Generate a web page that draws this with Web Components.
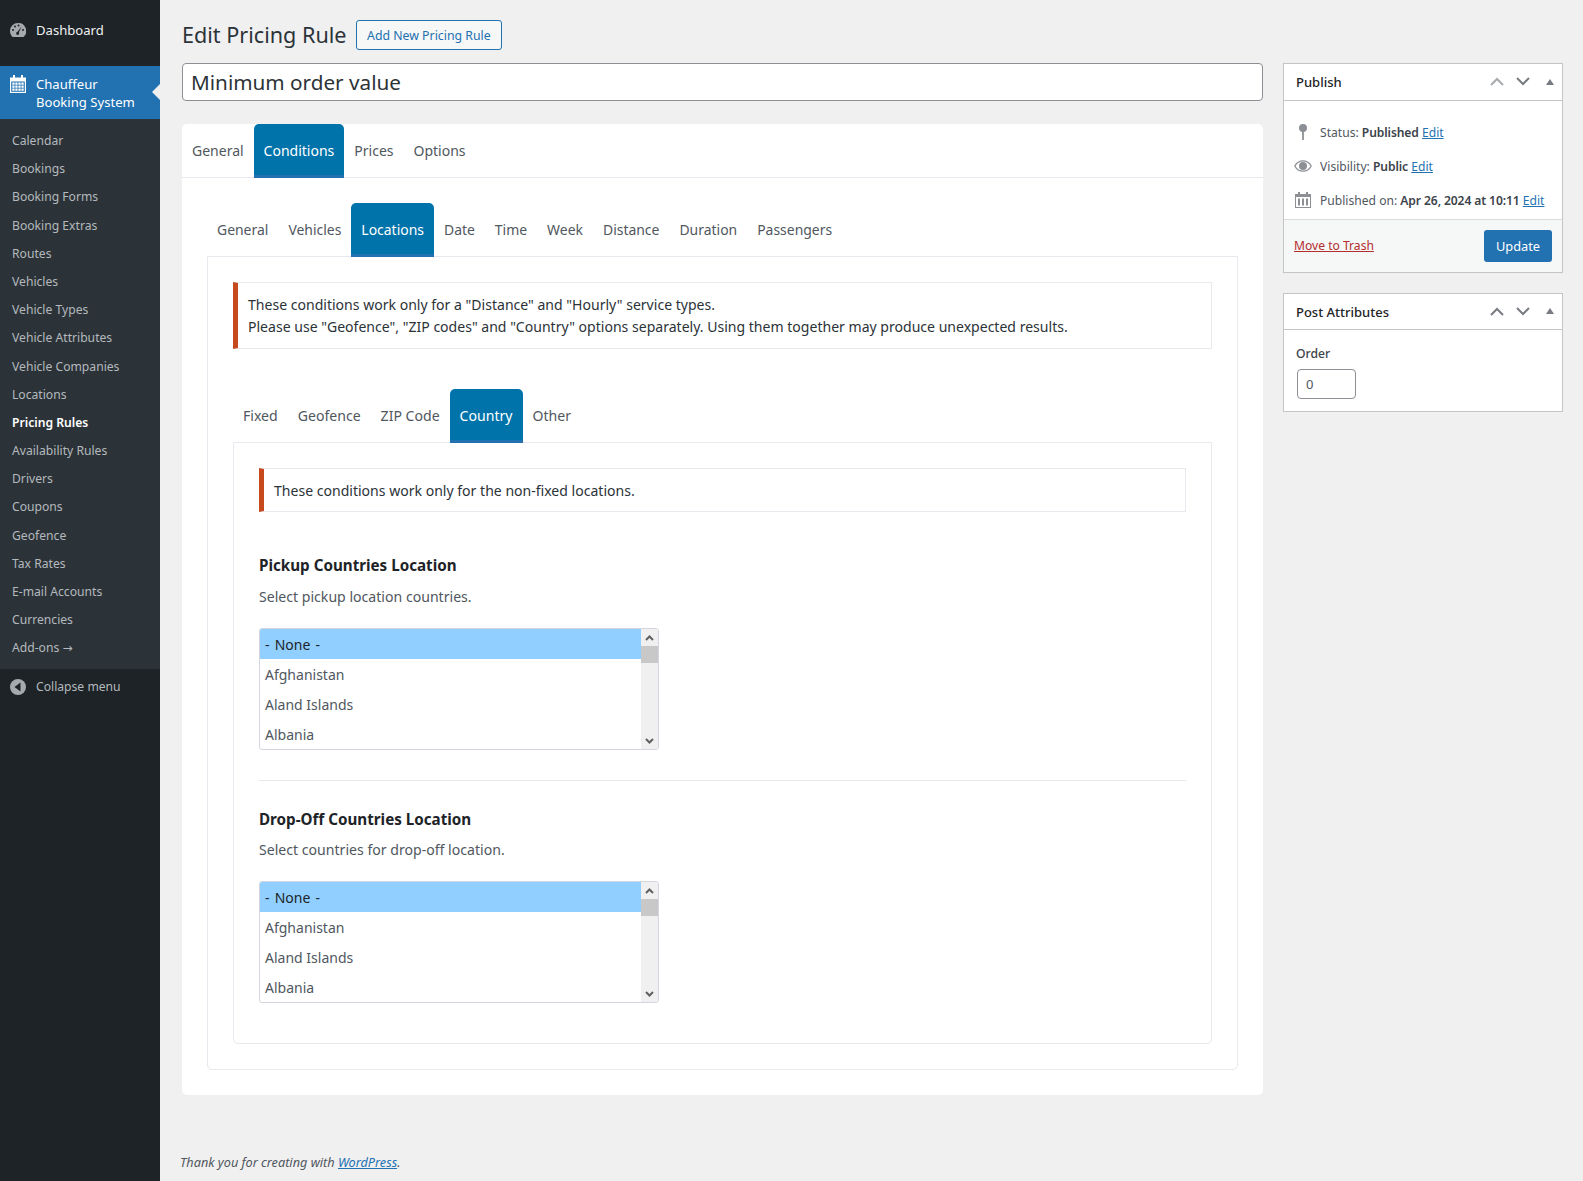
<!DOCTYPE html>
<html>
<head>
<meta charset="utf-8">
<title>Edit Pricing Rule</title>
<style>
  html, body { margin: 0; background: #f0f0f1; }
  body { font: 13px "Noto Sans", "Open Sans", sans-serif; color: #3c434a; }
</style>
</head>
<body>
<wp-shell>
  <wp-sidebar slot="side">
    <menu-top icon="gauge">Dashboard</menu-top>
    <menu-top icon="calendar" active>Chauffeur<br>Booking System</menu-top>
    <side-link slot="sub">Calendar</side-link>
    <side-link slot="sub">Bookings</side-link>
    <side-link slot="sub">Booking Forms</side-link>
    <side-link slot="sub">Booking Extras</side-link>
    <side-link slot="sub">Routes</side-link>
    <side-link slot="sub">Vehicles</side-link>
    <side-link slot="sub">Vehicle Types</side-link>
    <side-link slot="sub">Vehicle Attributes</side-link>
    <side-link slot="sub">Vehicle Companies</side-link>
    <side-link slot="sub">Locations</side-link>
    <side-link slot="sub" current>Pricing Rules</side-link>
    <side-link slot="sub">Availability Rules</side-link>
    <side-link slot="sub">Drivers</side-link>
    <side-link slot="sub">Coupons</side-link>
    <side-link slot="sub">Geofence</side-link>
    <side-link slot="sub">Tax Rates</side-link>
    <side-link slot="sub">E-mail Accounts</side-link>
    <side-link slot="sub">Currencies</side-link>
    <side-link slot="sub">Add-ons <span style="font-family:'DejaVu Sans',sans-serif;font-size:12px">→</span></side-link>
    <menu-top slot="after" icon="collapse" muted>Collapse menu</menu-top>
  </wp-sidebar>

  <page-head slot="head" title="Edit Pricing Rule" action="Add New Pricing Rule"></page-head>

  <title-input slot="main" value="Minimum order value"></title-input>
  <tab-card slot="main">
    <tab-strip>
      <tab-item>General</tab-item><tab-item active>Conditions</tab-item><tab-item>Prices</tab-item><tab-item>Options</tab-item>
    </tab-strip>
    <div style="padding:25px 25px 25px 25px">
      <tab-strip bare style="font-size:13.95px">
        <tab-item>General</tab-item><tab-item>Vehicles</tab-item><tab-item active>Locations</tab-item><tab-item>Date</tab-item><tab-item>Time</tab-item><tab-item>Week</tab-item><tab-item>Distance</tab-item><tab-item>Duration</tab-item><tab-item>Passengers</tab-item>
      </tab-strip>
      <tab-panel>
        <note-box>These conditions work only for a "Distance" and "Hourly" service types.<br>Please use "Geofence", "ZIP codes" and "Country" options separately. Using them together may produce unexpected results.</note-box>
        <tab-strip bare style="margin-top:40px;font-size:14.08px">
          <tab-item>Fixed</tab-item><tab-item>Geofence</tab-item><tab-item>ZIP Code</tab-item><tab-item active>Country</tab-item><tab-item>Other</tab-item>
        </tab-strip>
        <tab-panel>
          <note-box style="--note-bottom:9px">These conditions work only for the non-fixed locations.</note-box>
          <field-group label="Pickup Countries Location" hint="Select pickup location countries." style="margin-top:42px;--hint-gap:10px">
            <country-list></country-list>
          </field-group>
          <field-group divided label="Drop-Off Countries Location" hint="Select countries for drop-off location.">
            <country-list></country-list>
          </field-group>
        </tab-panel>
      </tab-panel>
    </div>
  </tab-card>

  <meta-box slot="aside" heading="Publish" up-off>
    <publish-body></publish-body>
  </meta-box>
  <meta-box slot="aside" heading="Post Attributes" thin>
    <order-field></order-field>
  </meta-box>

  <wp-foot slot="foot"></wp-foot>
</wp-shell>

<script>
const ICONS = {
  gauge: `<svg width="16" height="14" viewBox="0 0 16 14"><path fill="currentColor" d="M8 0a8 8 0 0 0-8 8c0 2.300 1 4.400 2.500 6h11A8 8 0 0 0 8 0z"/><g fill="#1d2327"><circle cx="3" cy="7" r="1"/><circle cx="5" cy="3.600" r="1"/><circle cx="8.500" cy="2.400" r="1"/><circle cx="13" cy="7" r="1"/><path d="M11.600 3.200 8.900 9.400a1.500 1.500 0 1 1-1.300-.6z"/></g></svg>`,
  calendar: `<svg width="16" height="18" viewBox="0 0 16 18"><path fill="currentColor" d="M3 0h2v2.500h6V0h2v2.500h3V18H0V2.500h3z"/><path fill="#2271b1" d="M1.200 6.500h13.600v10.300H1.200z"/><g fill="currentColor"><rect x="2.300" y="7.500" width="2.300" height="2.300"/><rect x="5.300" y="7.500" width="2.300" height="2.300"/><rect x="8.400" y="7.500" width="2.300" height="2.300"/><rect x="11.400" y="7.500" width="2.300" height="2.300"/><rect x="2.300" y="10.500" width="2.300" height="2.300"/><rect x="5.300" y="10.500" width="2.300" height="2.300"/><rect x="8.400" y="10.500" width="2.300" height="2.300"/><rect x="11.400" y="10.500" width="2.300" height="2.300"/><rect x="2.300" y="13.500" width="2.300" height="2.300"/><rect x="5.300" y="13.500" width="2.300" height="2.300"/><rect x="8.400" y="13.500" width="2.300" height="2.300"/><rect x="11.400" y="13.500" width="2.300" height="2.300"/></g></svg>`,
  collapse: `<svg width="16" height="16" viewBox="0 0 16 16"><circle cx="8" cy="8" r="8" fill="currentColor"/><path fill="#1d2327" d="M10.500 3.500v9L4.500 8z"/></svg>`
};

class WpShell extends HTMLElement {
  constructor() { super(); this.attachShadow({ mode: "open" }); }
  connectedCallback() {
    this.shadowRoot.innerHTML = /* html */ `
      <style>
        :host { display: flex; width: 1583px; min-height: 1181px; }
        .side { flex: 0 0 160px; display: flex; }
        .content { flex: 1; padding: 20px 20px 0 22px; min-width: 0; }
        .cols { display: flex; gap: 20px; align-items: flex-start; }
        .primary { flex: 1; min-width: 0; }
        .secondary { flex: 0 0 280px; display: flex; flex-direction: column; gap: 20px; }
      </style>
      <div class="side"><slot name="side"></slot></div>
      <div class="content">
        <slot name="head"></slot>
        <div class="cols">
          <div class="primary"><slot name="main"></slot></div>
          <div class="secondary"><slot name="aside"></slot></div>
        </div>
        <slot name="foot"></slot>
      </div>`;
  }
}

class WpSidebar extends HTMLElement {
  constructor() { super(); this.attachShadow({ mode: "open" }); }
  connectedCallback() {
    this.shadowRoot.innerHTML = /* html */ `
      <style>
        :host { display: block; width: 160px; background: #1d2327; padding-top: 13px; box-sizing: border-box; }
        .top { display: flex; flex-direction: column; gap: 19px; }
        .sub { background: #2c3338; padding: 8px 0 6px; }
        .after { padding-top: 1px; }
      </style>
      <div class="top"><slot></slot></div>
      <div class="sub"><slot name="sub"></slot></div>
      <div class="after"><slot name="after"></slot></div>`;
  }
}

class MenuTop extends HTMLElement {
  constructor() { super(); this.attachShadow({ mode: "open" }); }
  connectedCallback() {
    this.shadowRoot.innerHTML = /* html */ `
      <style>
        :host { display: flex; position: relative; align-items: center; min-height: 34px; padding: 8px 0 8px 10px; box-sizing: border-box; color: #f0f0f1; font-size: 13.100px; line-height: 18px; }
        :host([active]) { background: #2271b1; color: #fff; min-height: 53px; align-items: flex-start; padding-top: 8.500px; }
        :host([muted]) { color: #b4b9be; font-size: 12.150px; min-height: 34px; }
        .ico { flex: 0 0 26px; display: flex; color: #a7aaad; }
        :host([active]) .ico { color: #fff; }
        :host([muted]) .ico { color: #a7aaad; }
        :host([active])::after { content: ""; position: absolute; right: 0; top: 18px; border: 8px solid transparent; border-left: 0; border-right-color: #f0f0f1; }
      </style>
      <span class="ico">${ICONS[this.getAttribute("icon")]}</span>
      <span><slot></slot></span>`;
  }
}

class SideLink extends HTMLElement {
  constructor() { super(); this.attachShadow({ mode: "open" }); }
  connectedCallback() {
    this.shadowRoot.innerHTML = /* html */ `
      <style>
        :host { display: block; padding: 5px 12px; height: 18.200px; font-size: 12.150px; line-height: 18.200px; color: #b4b9be; }
        :host([current]) { color: #fff; font-weight: 600; }
      </style>
      <slot></slot>`;
  }
}

class PageHead extends HTMLElement {
  constructor() { super(); this.attachShadow({ mode: "open" }); }
  connectedCallback() {
    this.shadowRoot.innerHTML = /* html */ `
      <style>
        :host { display: flex; align-items: center; gap: 9px; height: 30px; margin-bottom: 13px; }
        h1 { margin: 0; font-size: 21.600px; font-weight: 400; line-height: 30px; color: #2c3338; }
        .btn { border: 1px solid #2271b1; border-radius: 3px; color: #2271b1; background: #f6f7f7; font-size: 12.300px; height: 28px; line-height: 30px; padding: 0 10.500px; }
      </style>
      <h1>${this.getAttribute("title")}</h1><span class="btn">${this.getAttribute("action")}</span>`;
  }
}

class TitleInput extends HTMLElement {
  constructor() { super(); this.attachShadow({ mode: "open" }); }
  connectedCallback() {
    this.shadowRoot.innerHTML = /* html */ `
      <style>
        :host { display: block; box-sizing: border-box; height: 38px; margin-bottom: 23px; border: 1px solid #8c8f94; border-radius: 4px; background: #fff; color: #2c3338; font-size: 20.700px; line-height: 36px; padding: 0 8px; }
      </style>
      ${this.getAttribute("value")}`;
  }
}

class TabCard extends HTMLElement {
  constructor() { super(); this.attachShadow({ mode: "open" }); }
  connectedCallback() {
    this.shadowRoot.innerHTML = /* html */ `
      <style>:host { display: block; background: #fff; border-radius: 5px; }</style>
      <slot></slot>`;
  }
}

class TabStrip extends HTMLElement {
  constructor() { super(); this.attachShadow({ mode: "open" }); }
  connectedCallback() {
    this.shadowRoot.innerHTML = /* html */ `
      <style>
        :host { display: flex; height: 54px; box-sizing: border-box; border-bottom: 1px solid #e8e8ef; font-size: 14px; }
        :host([bare]) { border-bottom: 0; margin-bottom: -1px; position: relative; }
      </style>
      <slot></slot>`;
  }
}

class TabItem extends HTMLElement {
  constructor() { super(); this.attachShadow({ mode: "open" }); }
  connectedCallback() {
    this.shadowRoot.innerHTML = /* html */ `
      <style>
        :host { display: flex; align-items: center; height: 54px; box-sizing: border-box; padding: 0 10px 2px; color: #50575e; }
        :host([active]) { background: #0073aa; color: #fff; border-radius: 5px 5px 0 0; border-bottom: 3px solid #2271b1; padding-bottom: 0; padding-top: 1px; }
      </style>
      <slot></slot>`;
  }
}

class TabPanel extends HTMLElement {
  constructor() { super(); this.attachShadow({ mode: "open" }); }
  connectedCallback() {
    this.shadowRoot.innerHTML = /* html */ `
      <style>:host { display: block; border: 1px solid #e8e8ef; border-radius: 0 0 5px 5px; padding: 25px; }</style>
      <slot></slot>`;
  }
}

class NoteBox extends HTMLElement {
  constructor() { super(); this.attachShadow({ mode: "open" }); }
  connectedCallback() {
    this.shadowRoot.innerHTML = /* html */ `
      <style>:host { display: block; border: 1px solid #e8e8ef; border-left: 5px solid #c74a1f; padding: 11px 10px var(--note-bottom, 10px); font-size: 14.050px; line-height: 22px; color: #2c3338; }</style>
      <slot></slot>`;
  }
}

class FieldGroup extends HTMLElement {
  constructor() { super(); this.attachShadow({ mode: "open" }); }
  connectedCallback() {
    this.shadowRoot.innerHTML = /* html */ `
      <style>
        :host { display: block; }
        :host([divided]) { border-top: 1px solid #e8e8ef; margin-top: 30px; padding-top: 27px; margin-bottom: 15px; }
        h3 { margin: 0; font-size: 15.200px; line-height: 22px; font-weight: 700; color: #1d2327; }
        p { margin: var(--hint-gap, 9px) 0 20px; font-size: 14.100px; line-height: 22px; color: #50575e; }
      </style>
      <h3>${this.getAttribute("label")}</h3>
      <p>${this.getAttribute("hint")}</p>
      <slot></slot>`;
  }
}

class CountryList extends HTMLElement {
  constructor() { super(); this.attachShadow({ mode: "open" }); }
  connectedCallback() {
    const rows = ["- None -", "Afghanistan", "Aland Islands", "Albania"];
    this.shadowRoot.innerHTML = /* html */ `
      <style>
        :host { display: flex; width: 400px; height: 122px; box-sizing: border-box; border: 1px solid #d4d5de; border-radius: 3px; background: #fff; overflow: hidden; font-size: 14px; }
        .rows { flex: 1; }
        .row { height: 30px; line-height: 32px; padding-left: 5px; color: #50575e; }
        .row.on { background: #90cfff; color: #1d2327; word-spacing: 1.500px; }
        .bar { flex: 0 0 17px; background: #f0f0f0; display: flex; flex-direction: column; justify-content: space-between; position: relative; }
        .arr { height: 17px; display: flex; align-items: center; justify-content: center; }
        .thumb { position: absolute; top: 17px; left: 0; right: 0; height: 17px; background: #c8c8c8; }
      </style>
      <div class="rows">${rows.map((r, i) => `<div class="row${i ? "" : " on"}">${r}</div>`).join("")}</div>
      <div class="bar">
        <span class="arr"><svg width="9" height="6" viewBox="0 0 9 6"><path d="M1 5l3.500-3.500L8 5" fill="none" stroke="#606060" stroke-width="2"/></svg></span>
        <span class="thumb"></span>
        <span class="arr"><svg width="9" height="6" viewBox="0 0 9 6"><path d="M1 1l3.500 3.500L8 1" fill="none" stroke="#606060" stroke-width="2"/></svg></span>
      </div>`;
  }
}

class MetaBox extends HTMLElement {
  constructor() { super(); this.attachShadow({ mode: "open" }); }
  connectedCallback() {
    const upColor = this.hasAttribute("up-off") ? "#a7aaad" : "#787c82";
    this.shadowRoot.innerHTML = /* html */ `
      <style>
        :host { display: block; background: #fff; border: 1px solid #c3c4c7; box-sizing: border-box; }
        .head { display: flex; align-items: center; height: 37px; box-sizing: border-box; border-bottom: 1px solid #c3c4c7; padding: 0 8px 0 12px; }
        :host([thin]) .head { height: 36px; }
        h2 { flex: 1; margin: 0; font-size: 13px; font-weight: 500; color: #1d2327; }
        .ctl { display: flex; align-items: center; gap: 12px; margin-top: -1px; }
      </style>
      <div class="head">
        <h2>${this.getAttribute("heading")}</h2>
        <div class="ctl">
          <svg width="14" height="9" viewBox="0 0 14 9"><path d="M1 8l6-6 6 6" fill="none" stroke="${upColor}" stroke-width="2"/></svg>
          <svg width="14" height="9" viewBox="0 0 14 9"><path d="M1 1l6 6 6-6" fill="none" stroke="#787c82" stroke-width="2"/></svg>
          <svg width="8" height="6" viewBox="0 0 8 6" style="margin-left:4px"><path d="M0 6l4-6 4 6z" fill="#787c82"/></svg>
        </div>
      </div>
      <slot></slot>`;
  }
}

class PublishBody extends HTMLElement {
  constructor() { super(); this.attachShadow({ mode: "open" }); }
  connectedCallback() {
    this.shadowRoot.innerHTML = /* html */ `
      <style>
        :host { display: block; font-size: 12.100px; color: #50575e; }
        .rows { padding: 14px 0 2px; }
        .row { display: flex; align-items: center; height: 34px; padding-left: 10px; }
        .ico { flex: 0 0 26px; display: flex; justify-content: center; padding-right: 8px; box-sizing: border-box; color: #8c8f94; }
        b { font-weight: 600; color: #3c434a; letter-spacing: -.1px; }
        a { color: #2271b1; text-decoration: underline; }
        .foot { display: flex; align-items: center; justify-content: space-between; background: #f6f7f7; border-top: 1px solid #dcdcde; height: 53px; padding: 0 10px; box-sizing: border-box; }
        .trash { color: #b32d2e; margin-top: -2px; }
        .up { background: #2271b1; color: #fff; border-radius: 3px; height: 32px; line-height: 32px; width: 68px; text-align: center; font-size: 12.800px; }
      </style>
      <div class="rows">
        <div class="row"><span class="ico"><svg width="8" height="16" viewBox="0 0 8 16"><circle cx="4" cy="4" r="4" fill="currentColor"/><rect x="3.100" y="6" width="1.800" height="10" fill="currentColor"/></svg></span><span>Status: <b>Published</b> <a>Edit</a></span></div>
        <div class="row"><span class="ico"><svg width="18" height="12" viewBox="0 0 18 12"><path fill="none" stroke="currentColor" stroke-width="1.300" d="M.8 6C2.500 2.800 5.500.8 9 .8s6.500 2 8.200 5.200c-1.700 3.200-4.700 5.200-8.200 5.200S2.500 9.200.8 6z"/><circle cx="9" cy="6" r="4" fill="currentColor"/></svg></span><span>Visibility: <b>Public</b> <a>Edit</a></span></div>
        <div class="row"><span class="ico"><svg width="16" height="16" viewBox="0 0 16 16"><path fill="currentColor" fill-rule="evenodd" d="M3 0h2v2h6V0h2v2h3v14H0V2h3zM1 5v10h14V5z"/><path fill="currentColor" d="M3 6.500h2v7H3zM7 6.500h2v7H7zM11 6.500h2v7h-2z"/></svg></span><span>Published on: <b>Apr 26, 2024 at 10:11</b> <a>Edit</a></span></div>
      </div>
      <div class="foot"><a class="trash">Move to Trash</a><span class="up">Update</span></div>`;
  }
}

class OrderField extends HTMLElement {
  constructor() { super(); this.attachShadow({ mode: "open" }); }
  connectedCallback() {
    this.shadowRoot.innerHTML = /* html */ `
      <style>
        :host { display: block; padding: 15px 12px 12px; font-size: 12.200px; color: #3c434a; }
        .lab { line-height: 18px; font-weight: 500; }
        .box { margin: 6px 0 0 1px; width: 59px; height: 30px; box-sizing: border-box; border: 1px solid #8c8f94; border-radius: 4px; line-height: 28px; padding-left: 8px; font-size: 13px; color: #50575e; }
      </style>
      <div class="lab">Order</div>
      <div class="box">0</div>`;
  }
}

class WpFoot extends HTMLElement {
  constructor() { super(); this.attachShadow({ mode: "open" }); }
  connectedCallback() {
    this.shadowRoot.innerHTML = /* html */ `
      <style>
        :host { display: block; margin: 57px 0 0 -2px; font-size: 12.700px; font-style: italic; line-height: 20px; color: #50575e; }
        a { color: #2271b1; text-decoration: underline; }
      </style>
      Thank you for creating with <a>WordPress</a>.`;
  }
}

customElements.define("wp-shell", WpShell);
customElements.define("wp-sidebar", WpSidebar);
customElements.define("menu-top", MenuTop);
customElements.define("side-link", SideLink);
customElements.define("page-head", PageHead);
customElements.define("title-input", TitleInput);
customElements.define("tab-card", TabCard);
customElements.define("tab-strip", TabStrip);
customElements.define("tab-item", TabItem);
customElements.define("tab-panel", TabPanel);
customElements.define("note-box", NoteBox);
customElements.define("field-group", FieldGroup);
customElements.define("country-list", CountryList);
customElements.define("meta-box", MetaBox);
customElements.define("publish-body", PublishBody);
customElements.define("order-field", OrderField);
customElements.define("wp-foot", WpFoot);
</script>
</body>
</html>
